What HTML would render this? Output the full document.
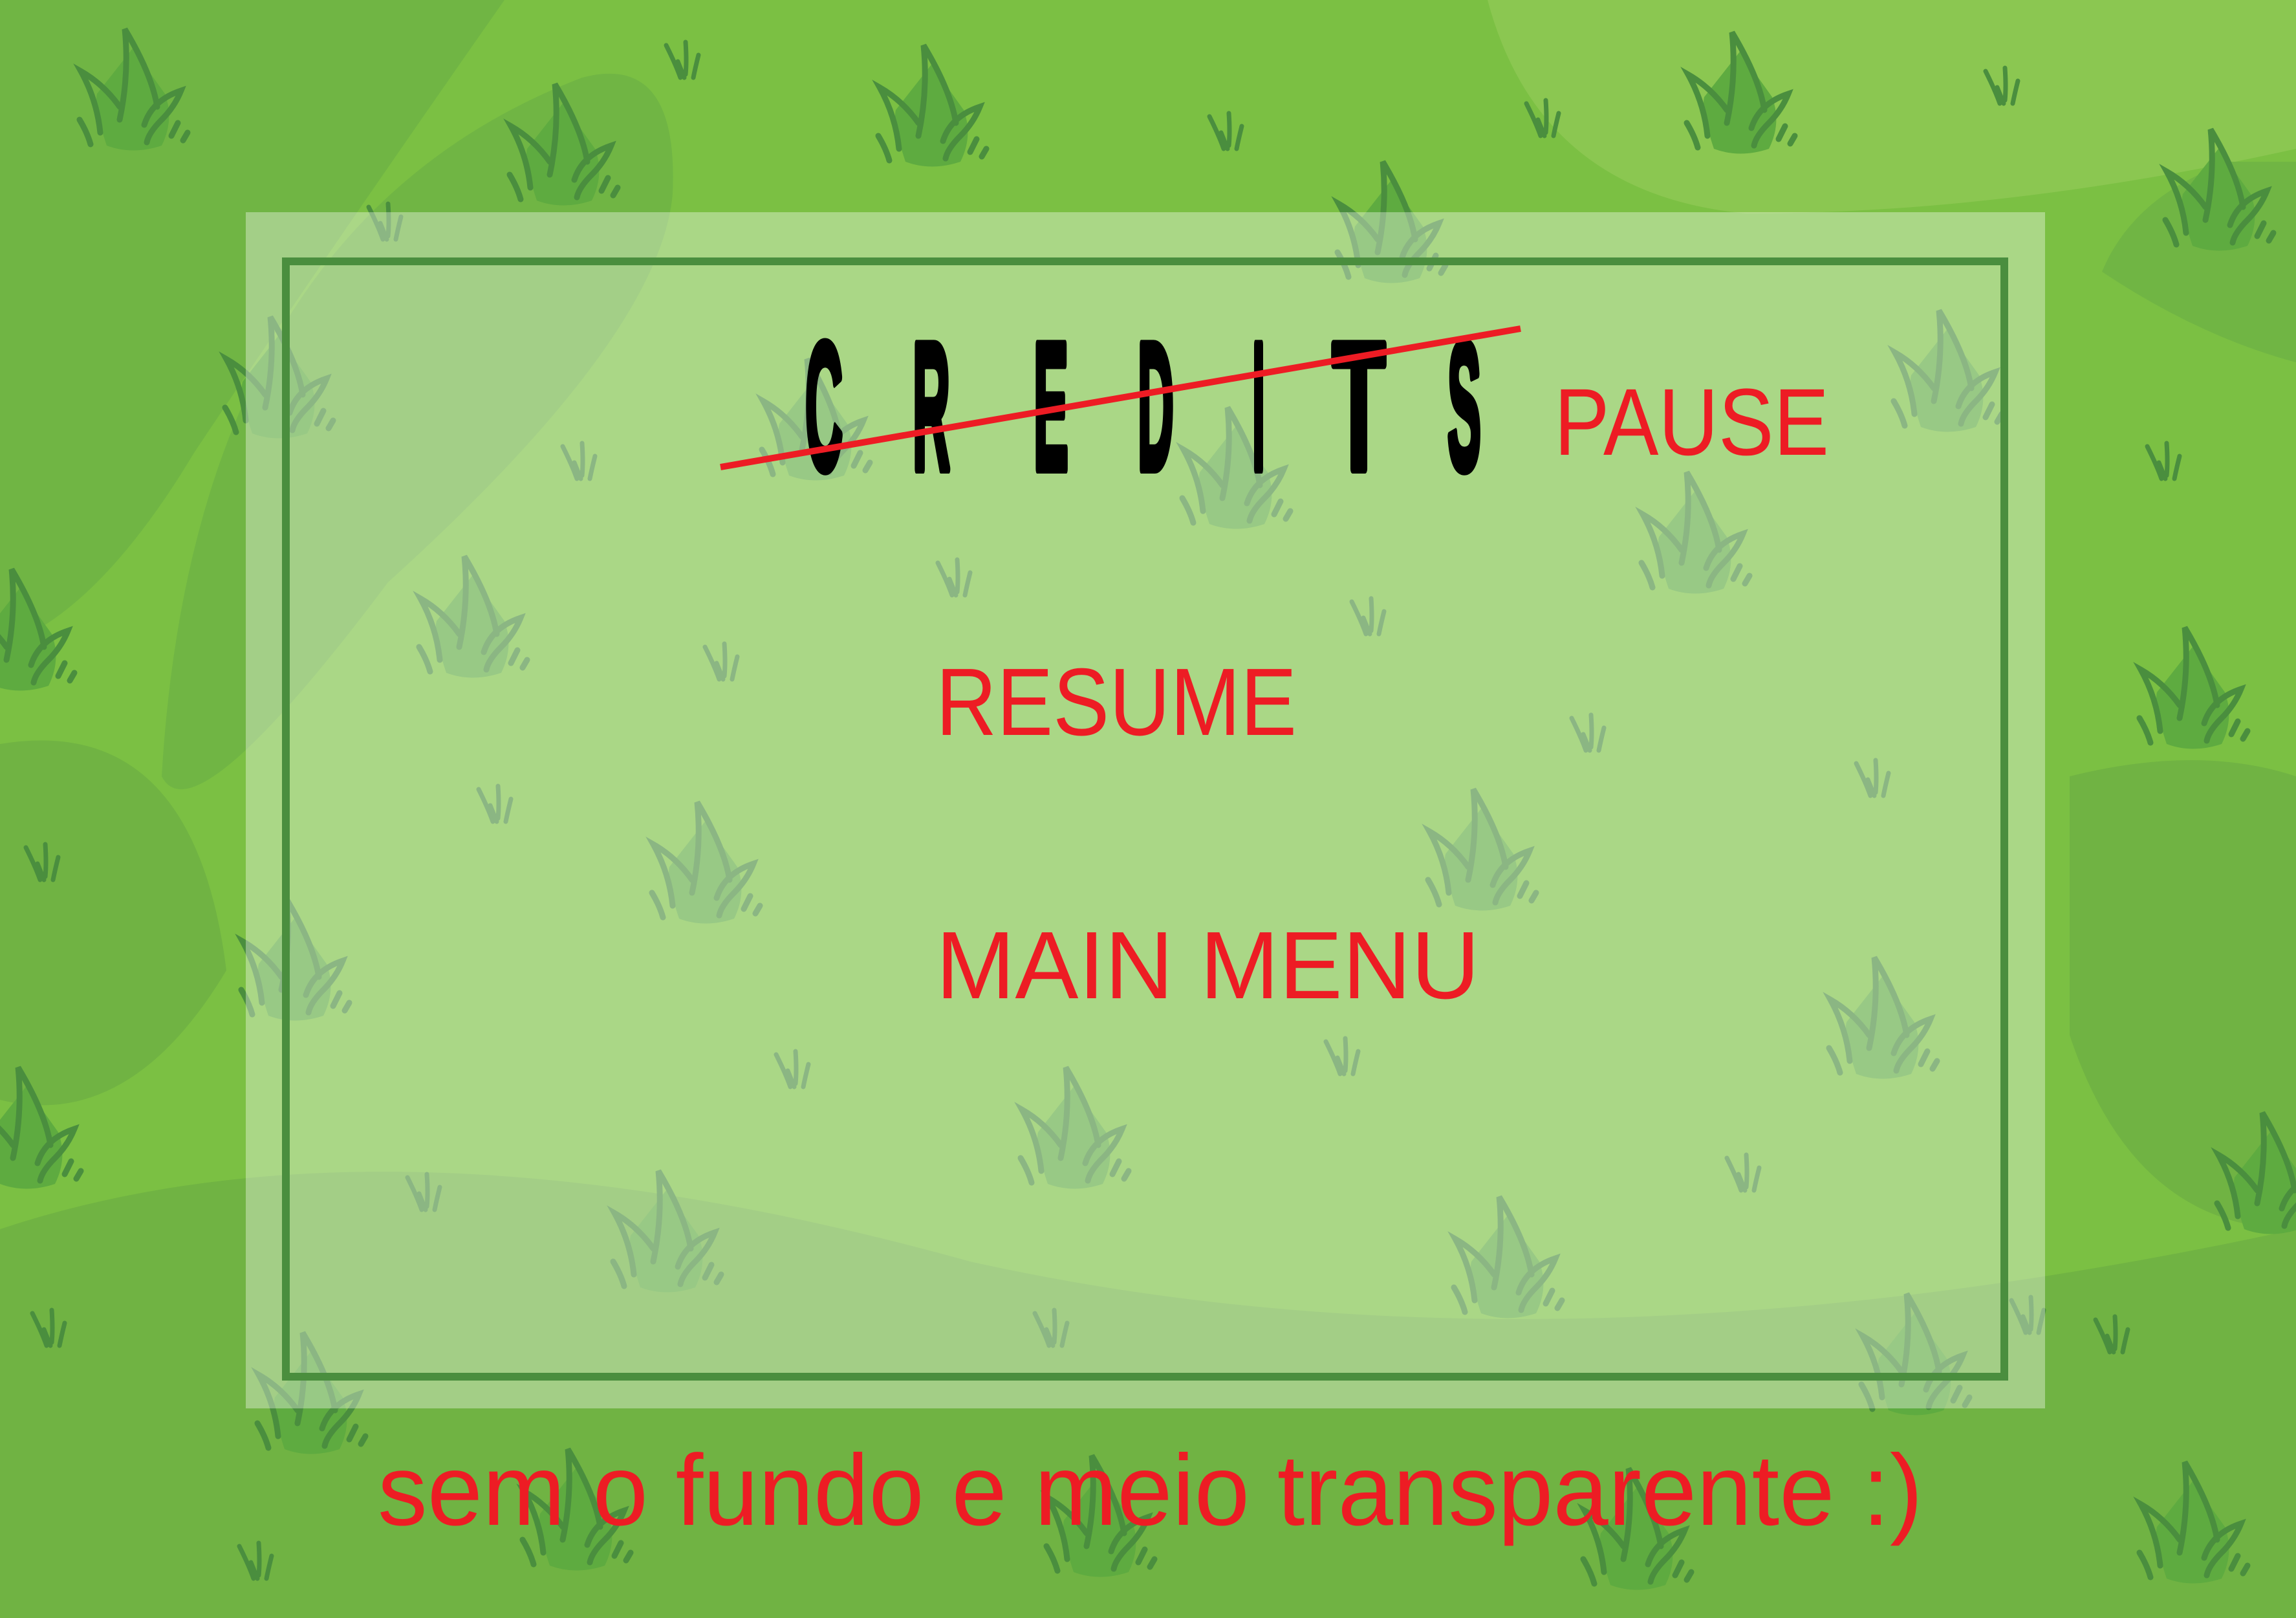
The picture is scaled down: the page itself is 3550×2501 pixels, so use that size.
<!DOCTYPE html>
<html><head><meta charset="utf-8"><style>
html,body{margin:0;padding:0;width:3550px;height:2501px;overflow:hidden;background:#7bc043}
svg{display:block}
</style></head><body>
<svg width="3550" height="2501" viewBox="0 0 3550 2501" xmlns="http://www.w3.org/2000/svg">
<defs>
<g id="t">
<path d="M60 190 Q40 130 45 110 L100 40 L150 110 Q165 150 145 190 Q100 205 60 190Z" fill="#5eab40"/>
<g fill="none" stroke="#4a8e3e" stroke-width="9" stroke-linecap="round">
<path d="M80 150 Q95 80 88 10 Q130 80 138 130"/>
<path d="M50 170 Q45 120 20 75 Q55 95 80 130"/>
<path d="M118 158 Q130 120 175 105 Q165 130 145 150 Q125 170 122 185"/>
<path d="M18 150 Q30 170 35 188"/><path d="M160 175 L170 155"/><path d="M178 182 L185 170"/>
</g></g>
<g id="s" fill="none" stroke="#4a8e3e" stroke-width="7" stroke-linecap="round">
<path d="M10 10 Q25 40 32 60"/><path d="M40 5 Q42 35 40 55"/><path d="M60 25 Q55 45 52 60"/><path d="M28 35 L38 60"/>
</g>
</defs>
<rect width="3550" height="2501" fill="#7bc043"/>
<path d="M0 0 L780 0 Q500 400 300 700 Q150 950 0 1000Z" fill="#70b544"/>
<path d="M250 1200 Q300 350 900 120 Q1050 80 1040 300 Q1020 520 600 900 Q300 1300 250 1200Z" fill="#70b544"/>
<path d="M2300 0 L3550 0 L3550 230 Q3100 330 2700 330 Q2380 300 2300 0Z" fill="#8bc751"/>
<path d="M3450 250 Q3300 300 3250 420 Q3400 520 3550 560 L3550 250Z" fill="#70b544"/>
<path d="M0 1900 Q600 1700 1500 1950 Q2400 2150 3550 1900 L3550 2501 L0 2501Z" fill="#70b343"/>
<path d="M3200 1200 Q3400 1150 3550 1200 L3550 1900 Q3300 1900 3200 1600Z" fill="#70b343"/>
<path d="M0 1150 Q300 1100 350 1500 Q200 1750 0 1700Z" fill="#70b343"/>
<g>
<use href="#t" x="105" y="35"/><use href="#t" x="770" y="120"/><use href="#t" x="1340" y="60"/>
<use href="#t" x="2590" y="40"/><use href="#t" x="3330" y="190"/><use href="#t" x="2050" y="240"/>
<use href="#t" x="330" y="480"/><use href="#t" x="2910" y="470"/><use href="#t" x="1160" y="545"/>
<use href="#t" x="1810" y="620"/><use href="#t" x="2520" y="720"/><use href="#t" x="630" y="850"/>
<use href="#t" x="3290" y="960"/><use href="#t" x="990" y="1230"/><use href="#t" x="2190" y="1210"/>
<use href="#t" x="355" y="1380"/><use href="#t" x="2810" y="1470"/><use href="#t" x="1560" y="1640"/>
<use href="#t" x="930" y="1800"/><use href="#t" x="2230" y="1840"/><use href="#t" x="2860" y="1990"/>
<use href="#t" x="380" y="2050"/><use href="#t" x="790" y="2230"/><use href="#t" x="1600" y="2240"/>
<use href="#t" x="2430" y="2260"/><use href="#t" x="3290" y="2250"/><use href="#t" x="-60" y="1640"/>
<use href="#t" x="3410" y="1710"/><use href="#t" x="-70" y="870"/>
<use href="#s" x="1020" y="60"/><use href="#s" x="1860" y="170"/><use href="#s" x="2350" y="150"/>
<use href="#s" x="560" y="310"/><use href="#s" x="860" y="680"/><use href="#s" x="1440" y="860"/>
<use href="#s" x="2080" y="920"/><use href="#s" x="1080" y="990"/><use href="#s" x="2420" y="1100"/>
<use href="#s" x="2860" y="1170"/><use href="#s" x="730" y="1210"/><use href="#s" x="1190" y="1620"/>
<use href="#s" x="2040" y="1600"/><use href="#s" x="620" y="1810"/><use href="#s" x="2660" y="1780"/>
<use href="#s" x="1590" y="2020"/><use href="#s" x="3230" y="2030"/><use href="#s" x="360" y="2380"/>
<use href="#s" x="40" y="2020"/><use href="#s" x="3100" y="2000"/><use href="#s" x="3060" y="100"/>
<use href="#s" x="3310" y="680"/><use href="#s" x="30" y="1300"/>
</g>
<rect x="380" y="328" width="2782" height="1849" fill="#fff" fill-opacity="0.36"/>
<rect x="442" y="404" width="2657" height="1724" fill="none" stroke="#4a8e3e" stroke-width="12"/>
<g font-family="Liberation Sans, sans-serif" font-weight="bold" font-size="280" fill="#000" stroke="#000" stroke-width="14" stroke-linejoin="round">
<text x="1245" y="725" textLength="58" lengthAdjust="spacingAndGlyphs">C</text>
<text x="1411" y="725" textLength="58" lengthAdjust="spacingAndGlyphs">R</text>
<text x="1598" y="725" textLength="54" lengthAdjust="spacingAndGlyphs">E</text>
<text x="1759" y="725" textLength="56" lengthAdjust="spacingAndGlyphs">D</text>
<text x="1936" y="725" textLength="20" lengthAdjust="spacingAndGlyphs">I</text>
<text x="2060" y="725" textLength="82" lengthAdjust="spacingAndGlyphs">T</text>
<text x="2238" y="725" textLength="52" lengthAdjust="spacingAndGlyphs">S</text>
</g>
<line x1="1114" y1="722" x2="2351" y2="508" stroke="#ed1c24" stroke-width="10"/>
<g font-family="Liberation Sans, sans-serif" fill="#ed1c24">
<text x="2403" y="703" font-size="147" textLength="425" lengthAdjust="spacingAndGlyphs">PAUSE</text>
<text x="1447" y="1136" font-size="148" textLength="558" lengthAdjust="spacingAndGlyphs">RESUME</text>
<text x="1447" y="1543" font-size="148" textLength="841" lengthAdjust="spacingAndGlyphs">MAIN MENU</text>
<text x="584" y="2357" font-size="156" textLength="2389" lengthAdjust="spacingAndGlyphs">sem o fundo e meio transparente :)</text>
</g>
</svg>
</body></html>
